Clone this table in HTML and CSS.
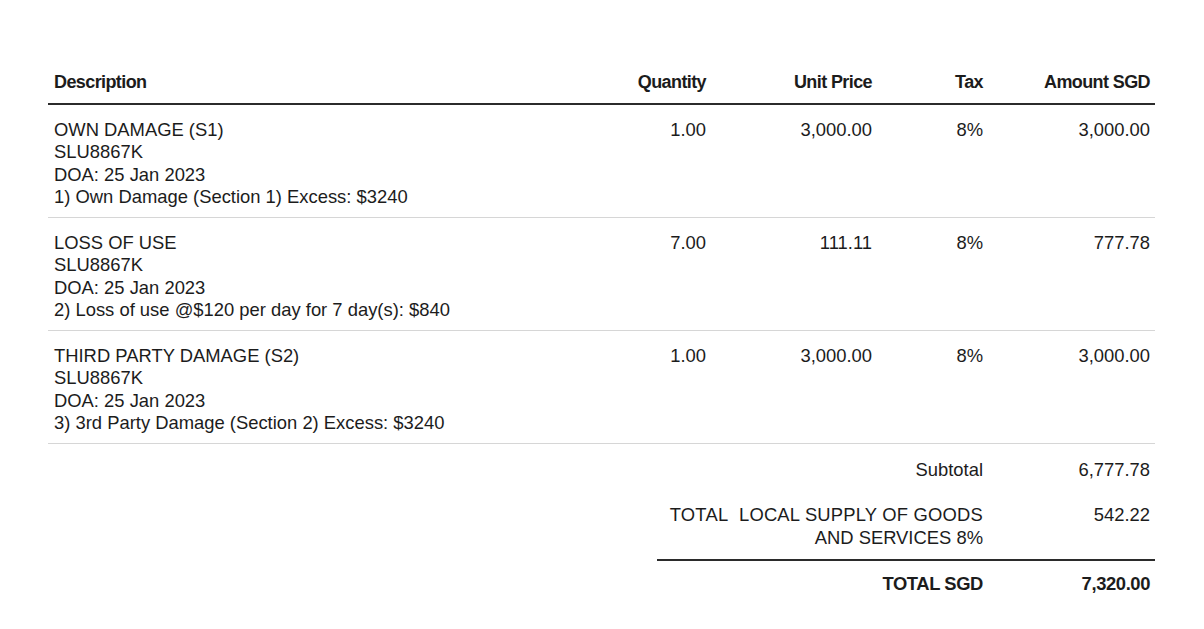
FILE: index.html
```html
<!DOCTYPE html>
<html>
<head>
<meta charset="utf-8">
<link rel="stylesheet" href="styles.css">
</head>
<body>
<div class="invoice">
  <div class="row head">
    <div class="c desc">Description</div>
    <div class="c num">Quantity</div>
    <div class="c num">Unit Price</div>
    <div class="c num">Tax</div>
    <div class="c num">Amount SGD</div>
  </div>
  <div class="row item">
    <div class="c desc">OWN DAMAGE (S1)<br>SLU8867K<br>DOA: 25 Jan 2023<br>1) Own Damage (Section 1) Excess: $3240</div>
    <div class="c num">1.00</div>
    <div class="c num">3,000.00</div>
    <div class="c num">8%</div>
    <div class="c num">3,000.00</div>
  </div>
  <div class="row item">
    <div class="c desc">LOSS OF USE<br>SLU8867K<br>DOA: 25 Jan 2023<br>2) Loss of use @$120 per day for 7 day(s): $840</div>
    <div class="c num">7.00</div>
    <div class="c num">111.11</div>
    <div class="c num">8%</div>
    <div class="c num">777.78</div>
  </div>
  <div class="row item">
    <div class="c desc">THIRD PARTY DAMAGE (S2)<br>SLU8867K<br>DOA: 25 Jan 2023<br>3) 3rd Party Damage (Section 2) Excess: $3240</div>
    <div class="c num">1.00</div>
    <div class="c num">3,000.00</div>
    <div class="c num">8%</div>
    <div class="c num">3,000.00</div>
  </div>
  <div class="totals">
    <div class="trow sub">
      <div class="c num label">Subtotal</div>
      <div class="c num">6,777.78</div>
    </div>
    <div class="trow gst">
      <div class="c num label"><span class="wide">TOTAL&nbsp; LOCAL SUPPLY OF GOODS</span><br>AND SERVICES 8%</div>
      <div class="c num">542.22</div>
    </div>
    <div class="trow grand">
      <div class="c num label">TOTAL SGD</div>
      <div class="c num">7,320.00</div>
    </div>
  </div>
</div>
</body>
</html>
```
FILE: styles.css
```css
html, body {
  margin: 0;
  padding: 0;
  background: #ffffff;
}
body {
  font-family: "Liberation Sans", Arial, sans-serif;
  color: #1c1c1c;
  font-size: 18.4px;
  line-height: 22.5px;
}
.invoice {
  width: 1107px;
  margin: 0 0 0 48px;
  padding-top: 71px;
}
.row {
  display: grid;
  grid-template-columns: 512px 151px 166px 111px 167px;
}
.c {
  padding: 0 5px 0 6px;
}
.num {
  text-align: right;
}
.head {
  font-weight: bold;
  font-size: 18px;
  letter-spacing: -0.6px;
  padding-bottom: 9px;
  border-bottom: 2px solid #2b2b2b;
}
.item {
  padding: 14px 0 8px;
  border-bottom: 1px solid #d6d6d6;
}
.totals {
  margin-left: 609px;
  width: 498px;
}
.trow {
  display: grid;
  grid-template-columns: 331px 167px;
}
.label {
  padding-left: 0;
  white-space: nowrap;
}
.sub {
  padding-top: 15px;
}
.gst {
  padding-top: 23px;
  padding-bottom: 10px;
  border-bottom: 2px solid #2b2b2b;
}
.wide {
  letter-spacing: 0.2px;
}
.grand {
  padding-top: 12px;
  font-weight: bold;
  letter-spacing: -0.4px;
}
```
